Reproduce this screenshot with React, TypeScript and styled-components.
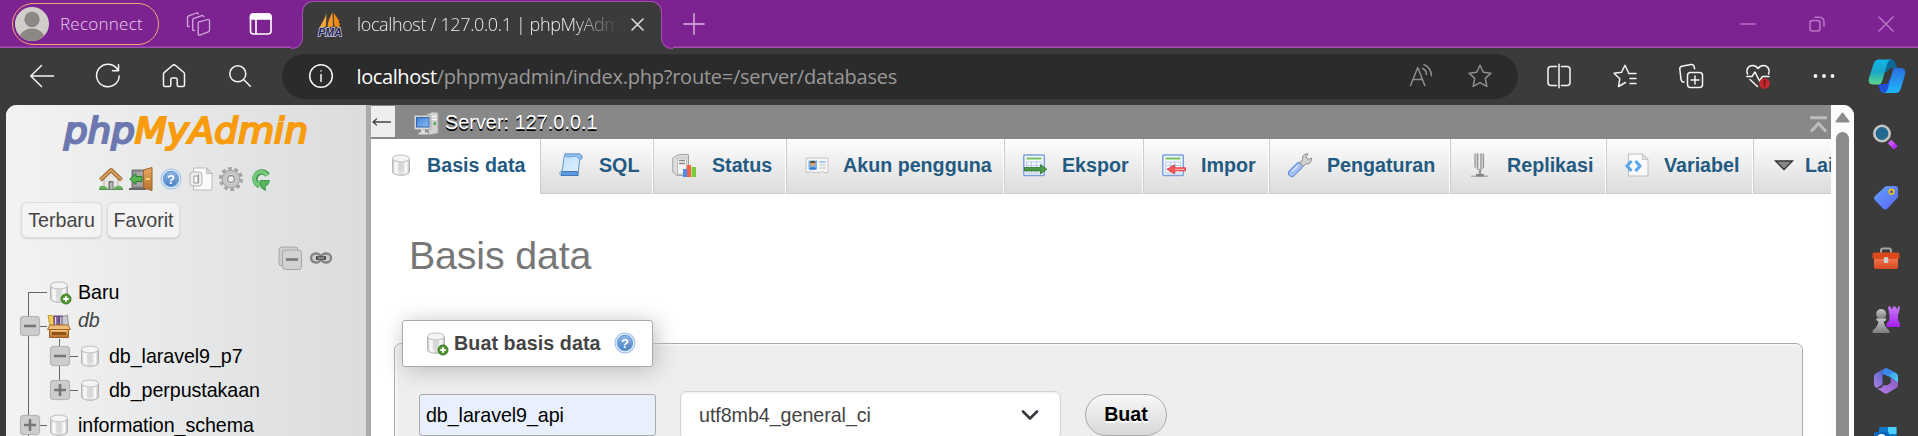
import React from "react";
import styled, { createGlobalStyle } from "styled-components";

const Global = createGlobalStyle`
  * { box-sizing: border-box; }
  html, body { margin: 0; padding: 0; background: #3b3b3b; overflow: hidden; }
  svg { display: block; flex: none; overflow: visible; }
`;

const uiFont = `"Open Sans", "Noto Sans", sans-serif`;
const pageFont = `"Liberation Sans", Arial, sans-serif`;

const Window = styled.div`
  width: 1918px;
  height: 436px;
  overflow: hidden;
  display: flex;
  flex-direction: column;
  background: #3b3b3b;
`;

/* ---------- title bar ---------- */

const TitleBar = styled.header`
  height: 48px;
  flex: none;
  display: flex;
  align-items: center;
  padding-left: 12px;
  background: #7d2291;
  box-shadow: inset 0 -1px #a14fb1, inset 0 -2px #8b3a9d;
`;

const ProfilePill = styled.div`
  width: 147px;
  height: 42px;
  margin-bottom: 1px;
  border: 1.5px solid #f3a774;
  border-radius: 21px;
  display: flex;
  align-items: center;
  padding-left: 2px;
  gap: 11px;
`;

const PillText = styled.span`
  font: 300 17px/24px ${uiFont};
  letter-spacing: 0.25px;
  color: #e6d2ea;
`;

const Slot = styled.div<{ $left?: number; $right?: number }>`
  flex: none;
  margin-left: ${(p) => p.$left ?? 0}px;
  margin-right: ${(p) => p.$right ?? 0}px;
`;

const BrowserTab = styled.div`
  position: relative;
  width: 360px;
  height: 47px;
  margin: 1px 0 0 29px;
  padding: 0 15px 2px 15px;
  display: flex;
  align-items: center;
  background: #3b3b3b;
  border: 1px solid #a14fb1;
  border-bottom: 0;
  border-radius: 11px 11px 0 0;
`;

/* Concave foot that joins the tab to the toolbar below. */
const TabFoot = styled.i<{ $side: "left" | "right" }>`
  position: absolute;
  bottom: 0;
  ${(p) => p.$side}: -12px;
  width: 12px;
  height: 12px;
  background: #3b3b3b;
  &::before {
    content: "";
    display: block;
    height: 12px;
    background: #7d2291;
    border-bottom: 1px solid #a14fb1;
    ${(p) =>
      p.$side === "left"
        ? "border-right: 1px solid #a14fb1; border-bottom-right-radius: 11px;"
        : "border-left: 1px solid #a14fb1; border-bottom-left-radius: 11px;"}
  }
`;

const TabTitle = styled.span`
  width: 262px;
  margin-left: 15px;
  margin-right: 12px;
  overflow: hidden;
  white-space: nowrap;
  font: 300 18px/26px ${uiFont};
  letter-spacing: -0.37px;
  color: #eeeeee;
  mask-image: linear-gradient(to right, #000 215px, transparent 262px);
`;

const WindowButtons = styled.div`
  margin-left: auto;
  margin-right: 24px;
  display: flex;
  gap: 53px;
`;

/* ---------- toolbar ---------- */

const Toolbar = styled.nav`
  height: 57px;
  flex: none;
  display: flex;
  align-items: center;
  padding: 0 12px 1px 30px;
`;

const NavButtons = styled.div`
  display: flex;
  gap: 42px;
`;

const AddressBar = styled.div`
  width: 1236px;
  height: 45px;
  margin-left: 30px;
  padding: 0 26px 0 27px;
  border-radius: 23px;
  background: #2b2b2b;
  display: flex;
  align-items: center;
`;

const Url = styled.span`
  flex: 1;
  margin-left: 23.500px;
  padding-top: 1px;
  font: 400 20px/28px ${uiFont};
  letter-spacing: -0.25px;
  white-space: nowrap;
  color: #989898;
  b { font-weight: 400; color: #fff; letter-spacing: -0.4px; }
`;

const ToolButtons = styled.div`
  margin-left: 29px;
  display: flex;
  align-items: center;
  gap: 42.3px;
`;

/* ---------- body ---------- */

const Body = styled.div`
  flex: 1;
  display: flex;
  padding-left: 6px;
`;

const Viewport = styled.div`
  width: 1848px;
  height: 331px;
  display: flex;
  overflow: hidden;
  border-radius: 11px 11px 0 0;
  background: #fff;
  font-family: ${pageFont};
  font-size: 19.68px;
`;

const SideNav = styled.aside`
  width: 360px;
  flex: none;
  background: linear-gradient(to right, #f3f3f3, #dadcde);
  display: flex;
  flex-direction: column;
`;

const LogoRow = styled.div`
  height: 62px;
  flex: none;
  padding: 6px 0 0 54px;
`;

const LinkIcons = styled.div`
  display: flex;
  flex: none;
  gap: 6px;
  padding-left: 93px;
`;

const Shortcuts = styled.div`
  display: flex;
  flex: none;
  gap: 5px;
  margin: 11px 0 0 15px;
`;

const ShortcutButton = styled.button<{ $w: number }>`
  width: ${(p) => p.$w}px;
  height: 36px;
  padding: 0;
  border: 1px solid #dcdcdc;
  border-radius: 6px;
  background: #f3f3f3;
  box-shadow: 0 1px 2px rgba(0, 0, 0, 0.13);
  font: 19.68px/34px ${pageFont};
  color: #444;
`;

const TreeTools = styled.div`
  height: 37px;
  flex: none;
  display: flex;
  align-items: center;
  justify-content: flex-end;
  gap: 7px;
  padding: 3px 33px 0 0;
`;

const Tree = styled.div`
  display: flex;
  flex: none;
  flex-direction: column;
`;

const TreeRow = styled.div<{ $h?: number; $pad?: number }>`
  height: ${(p) => p.$h ?? 34}px;
  padding: ${(p) => p.$pad ?? 0}px 0 0 14px;
  flex: none;
  display: flex;
  align-items: center;
`;

const Rail = styled.div<{ $from?: string; $to?: string; $line?: number; $h?: number }>`
  position: relative;
  width: 20px;
  height: ${(p) => p.$h ?? 34}px;
  flex: none;
  display: flex;
  align-items: center;
  &::before {
    content: "";
    position: absolute;
    left: ${(p) => p.$line ?? 8}px;
    top: ${(p) => p.$from ?? "0"};
    bottom: ${(p) => p.$to ?? "0"};
    width: 1px;
    background: #666;
  }
`;

const Wire = styled.i<{ $w: number; $left?: number }>`
  width: ${(p) => p.$w}px;
  margin-left: ${(p) => p.$left ?? 0}px;
  height: 1px;
  flex: none;
  background: #666;
`;

const Toggle = styled.span`
  position: relative;
  width: 20px;
  height: 20px;
  border: 1px solid #b5b5b5;
  border-radius: 4px;
  background: #cdcdcd;
  box-shadow: 0 0 1px #aaa;
  display: flex;
  align-items: center;
  justify-content: center;
`;

const NodeName = styled.span<{ $group?: boolean }>`
  margin-left: 7px;
  margin-top: ${(p) => (p.$group ? -12 : -1)}px;
  line-height: 24px;
  letter-spacing: -0.07px;
  color: ${(p) => (p.$group ? "#444" : "#000")};
  font-style: ${(p) => (p.$group ? "italic" : "normal")};
`;

const Resizer = styled.div`
  width: 5px;
  flex: none;
  background: #aaa;
`;

const Main = styled.main`
  width: 1460px;
  flex: none;
  overflow: hidden;
  background: #fff;
`;

const ServerBar = styled.div`
  height: 34px;
  display: flex;
  align-items: flex-start;
  background: #888;
`;

const Collapser = styled.div`
  width: 24px;
  height: 31px;
  margin-top: 1px;
  background: #eee;
  display: flex;
  align-items: center;
  padding-left: 1px;
`;

const ServerIcon = styled.div`
  margin: 7px 0 0 19px;
`;

const ServerText = styled.span`
  margin: 5px 0 0 7px;
  line-height: 24px;
  letter-spacing: 0.1px;
  color: #fff;
  text-shadow: 0 1.5px 0 #000;
`;

const TopLink = styled.div`
  margin: 11px 4px 0 auto;
`;

const TabStrip = styled.div`
  display: flex;
  height: 55px;
`;

const PageTab = styled.a<{ $w: number; $gap?: number; $active?: boolean }>`
  width: ${(p) => p.$w}px;
  flex: none;
  display: flex;
  align-items: center;
  gap: ${(p) => p.$gap ?? 15}px;
  padding: 0 0 ${(p) => (p.$active ? 4 : 3)}px 18px;
  font-weight: bold;
  line-height: 24px;
  white-space: nowrap;
  color: #235a81;
  background: ${(p) => (p.$active ? "#fff" : "linear-gradient(#fdfdfd, #dcdcdc)")};
  ${(p) => !p.$active && "border: 1px solid #ccc; border-top: 0; border-right-color: #fff;"}
`;

const Heading = styled.h2`
  margin: 37.500px 0 0 38px;
  font: normal 39.36px/46px ${pageFont};
  letter-spacing: -0.15px;
  color: #777;
`;

const Fieldset = styled.section`
  width: 1409px;
  height: 200px;
  margin: 65.500px 0 0 23px;
  border: 1px solid #aaa;
  border-radius: 7px 7px 0 0;
  background: #eee;
  box-shadow: inset 1px 1px 3px #fff;
`;

const Legend = styled.div`
  width: 251px;
  height: 47px;
  margin: -24px 0 0 7px;
  padding: 0 0 1px 21px;
  display: flex;
  align-items: center;
  border: 1px solid #aaa;
  border-radius: 3px;
  background: #fff;
  box-shadow: 3px 3px 22px #bbb;
  font-weight: bold;
  color: #444;
`;

const LegendText = styled.span`
  margin: 0 12px 0 6px;
  line-height: 24px;
  letter-spacing: 0.08px;
`;

const FormRow = styled.div`
  display: flex;
  align-items: center;
  margin: 24px 0 0 24px;
`;

const NameInput = styled.div`
  width: 237px;
  height: 42px;
  padding-left: 6px;
  border: 1px solid #aaa;
  border-radius: 3px;
  background: #e8f0fe;
  line-height: 41px;
  letter-spacing: -0.07px;
  color: #000;
`;

const Collation = styled.div`
  width: 381px;
  height: 48px;
  margin-left: 24px;
  padding: 0 21px 0 18px;
  display: flex;
  align-items: center;
  justify-content: space-between;
  border: 1px solid #ced4da;
  border-radius: 6px;
  background: #fff;
  box-shadow: inset 0 1px 2px rgba(0, 0, 0, 0.08);
  line-height: 46px;
  letter-spacing: -0.05px;
  color: #444;
`;

const CreateButton = styled.button`
  width: 82px;
  height: 42px;
  margin-left: 24px;
  padding: 0 0 1px;
  border: 1px solid #aaa;
  border-radius: 21px;
  background: linear-gradient(#f8f8f8, #d8d8d8);
  font: bold 19.68px/39px ${pageFont};
  color: #000;
  text-shadow: 0 1.5px 0 #fff;
`;

const ScrollTrack = styled.div`
  width: 23px;
  flex: none;
  display: flex;
  flex-direction: column;
  align-items: center;
  padding: 7px 0 0 0;
  background: #fcfcfc;
`;

const ScrollThumb = styled.div`
  flex: 1;
  width: 13px;
  margin-top: 9px;
  border-radius: 7px 7px 0 0;
  background: #8b8b8b;
`;

const EdgeSidebar = styled.aside`
  width: 64px;
  height: 331px;
  overflow: hidden;
  display: flex;
  flex-direction: column;
  align-items: center;
  gap: 33px;
  padding-top: 18px;
`;

/* ---------- line icons ---------- */

const LineSvg = styled.svg<{ $c?: string; $sw?: number }>`
  fill: none;
  stroke: ${(p) => p.$c ?? "#f5f5f5"};
  stroke-width: ${(p) => p.$sw ?? 1.5};
  stroke-linecap: round;
  stroke-linejoin: round;
`;

type LineProps = { c?: string; sw?: number; children: React.ReactNode; size?: number };
const Line = ({ c, sw, size = 24, children }: LineProps) => (
  <LineSvg $c={c} $sw={sw} width={size} height={size} viewBox={`0 0 ${size} ${size}`}>
    {children}
  </LineSvg>
);

const STAR = "M12 1.2l3.3 7 7.6 1-5.6 5.2 1.5 8L12 18.600l-6.800 3.800 1.500-8L1.100 9.200l7.600-1z";

const Avatar = () => (
  <svg width="34" height="34" viewBox="0 0 34 34">
    <defs>
      <clipPath id="face"><circle cx="17" cy="17" r="17" /></clipPath>
    </defs>
    <circle cx="17" cy="17" r="17" fill="#d0cecb" />
    <g clipPath="url(#face)" fill="#8b8886">
      <circle cx="17" cy="12.500" r="7.700" />
      <ellipse cx="17" cy="33" rx="13" ry="11.500" />
    </g>
  </svg>
);

const Favicon = () => (
  <svg width="24" height="24" viewBox="0 0 24 24">
    <path d="M8.500 1.500C7 6 4 11 1.500 15.500l6.500-1z" fill="#f5a53a" />
    <path d="M14.500 0C12 5 9.500 10 9.500 15.500l5.500-1z" fill="#f7951d" />
    <path d="M16 1c-.5 5 0 10 .500 13.500l6.500 1c-3-1.500-1-3-1-4l-2-1c2-1 1-2 .500-2.500z" fill="#f08a12" />
    <text x="0.300" y="23.600" textLength="23.500" lengthAdjust="spacingAndGlyphs" fontFamily="Liberation Sans, sans-serif" fontSize="10.500" fontWeight="bold" fontStyle="italic" fill="#23234f" stroke="#c3c3dc" strokeWidth="1.600" paintOrder="stroke">PMA</text>
  </svg>
);

const Copilot = () => (
  <svg width="38" height="34" viewBox="0 0 38 34">
    <defs>
      <linearGradient id="cpA" x1="0" y1="0" x2="0" y2="1"><stop offset="0" stopColor="#12b5e8" /><stop offset=".5" stopColor="#1aa7c8" /><stop offset="1" stopColor="#5fd98a" /></linearGradient>
      <linearGradient id="cpB" x1="0" y1="0" x2="0" y2="1"><stop offset="0" stopColor="#2a6fe0" /><stop offset="1" stopColor="#1fb6fa" /></linearGradient>
    </defs>
    <path d="M19 0.500h4c3 0 4 2 4.700 4.500l1.300 4h-5c-3 0-4 2-5 5l-5-4z" fill="#0b6a95" />
    <path d="M10 25h6c3 0 4-2 5-5l5 3-3 7c-1 3-2 4-4 4h-3c-3 0-4-2-4.500-4.500z" fill="#1d4fd8" />
    <path d="M10.500.5H24c-3 0-4 2-5 5L14.500 21c-1 3-2 4.500-4.500 4.500H5c-4 0-5-3-4-6.500L5.500 5C6.500 2 8 .5 10.500.5z" fill="url(#cpA)" />
    <path d="M27 9h5.500c4 0 5.500 3 4.500 6.500L33 29c-1 3-2.500 5-5.500 5H15c3 0 4-2 5-5l4-15c1-3 1-5 3-5z" fill="url(#cpB)" />
    <path d="M18.500 13h4.300l-3.600 12h-4.500z" fill="#3b3b3b" />
  </svg>
);

/* ---------- page icons ---------- */

const HiddenSvg = styled.svg`
  position: absolute;
`;

const Defs = () => (
  <HiddenSvg width="0" height="0">
    <defs>
      <linearGradient id="cyl" x1="0" y1="0" x2="1" y2="0"><stop offset="0" stopColor="#c9c9c9" /><stop offset=".2" stopColor="#f8f8f8" /><stop offset=".5" stopColor="#dcdcdc" /><stop offset=".8" stopColor="#f4f4f4" /><stop offset="1" stopColor="#bdbdbd" /></linearGradient>
      <linearGradient id="blu" x1="0" y1="0" x2="0" y2="1"><stop offset="0" stopColor="#8db7e8" /><stop offset="1" stopColor="#4a80c2" /></linearGradient>
      <linearGradient id="scroll" x1="0" y1="0" x2="1" y2="1"><stop offset="0" stopColor="#b5dcfa" /><stop offset="1" stopColor="#eaf5fe" /></linearGradient>
      <linearGradient id="wood" x1="0" y1="0" x2="0" y2="1"><stop offset="0" stopColor="#e8a960" /><stop offset="1" stopColor="#b87430" /></linearGradient>
      <linearGradient id="mon" x1="0" y1="0" x2="1" y2="1"><stop offset="0" stopColor="#3f7fd0" /><stop offset="1" stopColor="#8ec0f5" /></linearGradient>
      <linearGradient id="tag" x1="0" y1="0" x2="1" y2="1"><stop offset="0" stopColor="#62a4fa" /><stop offset="1" stopColor="#5a63f5" /></linearGradient>
      <linearGradient id="purple" x1="0" y1="0" x2="0" y2="1"><stop offset="0" stopColor="#c77bf5" /><stop offset="1" stopColor="#a51ef5" /></linearGradient>
      <linearGradient id="pawn" x1="0" y1="0" x2="0" y2="1"><stop offset="0" stopColor="#c6c6c6" /><stop offset="1" stopColor="#7d7d7d" /></linearGradient>
      <linearGradient id="box" x1="0" y1="0" x2="0" y2="1"><stop offset="0" stopColor="#f0764f" /><stop offset="1" stopColor="#d9481f" /></linearGradient>
      <linearGradient id="offA" x1="0" y1="1" x2="1" y2="0"><stop offset="0" stopColor="#b07fe0" /><stop offset="1" stopColor="#3a5fd0" /></linearGradient>
      <linearGradient id="offB" x1="0" y1="0" x2="1" y2="1"><stop offset="0" stopColor="#2f7be0" /><stop offset="1" stopColor="#4fd2f7" /></linearGradient>
      <linearGradient id="offC" x1="0" y1="1" x2="1" y2="0"><stop offset="0" stopColor="#b47ee8" /><stop offset="1" stopColor="#8a58c0" /></linearGradient>
    </defs>
  </HiddenSvg>
);

const Art = ({ children, w = 24, h = 24 }: { children: React.ReactNode; w?: number; h?: number }) => (
  <svg width={w} height={h} viewBox={`0 0 ${w} ${h}`}>{children}</svg>
);

const CylinderShape = () => (
  <g>
    <path d="M3.500 5.500v13c0 5 17 5 17 0v-13z" fill="url(#cyl)" stroke="#b4b4b4" />
    <path d="M6.500 8v11M17.500 8v11" stroke="#fff" strokeWidth="1.500" opacity=".8" />
    <ellipse cx="12" cy="5.500" rx="8.500" ry="3.500" fill="#f4f4f4" stroke="#bdbdbd" />
    <path d="M9 9.500v9h6v-9z" fill="#d2d2d2" opacity=".6" />
  </g>
);
const Database = () => <Art><CylinderShape /></Art>;
const DatabaseNew = () => (
  <Art>
    <CylinderShape />
    <circle cx="19" cy="19" r="5" fill="#4f9430" stroke="#3b7a20" />
    <path d="M19 16.200v5.600M16.200 19h5.600" stroke="#fff" strokeWidth="2" />
  </Art>
);
const Help = () => (
  <Art>
    <circle cx="12" cy="12" r="10.500" fill="#a3c1e6" />
    <circle cx="12" cy="12" r="8.800" fill="#6b9bd4" stroke="#dfeafa" strokeWidth="1.300" />
    <circle cx="12" cy="12" r="7" fill="url(#blu)" />
    <text x="12" y="16.600" textAnchor="middle" fontFamily="Liberation Sans, sans-serif" fontSize="13" fontWeight="bold" fill="#fff">?</text>
  </Art>
);
const House = () => (
  <Art>
    <path d="M5 12l7-7 7 7v9H5z" fill="#e9e6e2" stroke="#b9b3aa" />
    <path d="M9.500 14h5v8h-5z" fill="#777" />
    <path d="M11 15.500h2.500V22H11z" fill="#b5b5b5" />
    <path d="M1.500 13L12 3l10.500 10" fill="none" stroke="#99612a" strokeWidth="4" strokeLinejoin="round" />
    <path d="M1.800 12.600L12 3l10.200 9.600" fill="none" stroke="#dba263" strokeWidth="2" />
    <path d="M0 22c0-3 3-4 4.500-3 2 0 3 1 4 3zM15 22c0-2 2-3 3.500-3 2-1 5 0 5.500 3z" fill="#64b35a" />
    <path d="M0 22.500h24" stroke="#5b8a55" />
  </Art>
);
const Exit = () => (
  <Art>
    <path d="M3 3h15v18H3z" fill="#8c8c8c" stroke="#6f6f6f" />
    <path d="M5 5h10v14H5z" fill="#a6a6a6" />
    <path d="M0 22h17" stroke="#666" strokeWidth="2" />
    <path d="M14.500 3L23 .500v23L14.500 21z" fill="url(#wood)" stroke="#a0642a" />
    <path d="M17 12h3.500" stroke="#ffe07a" strokeWidth="2" />
    <path d="M.8 12L7 6.500v3h6v5H7v3z" fill="#58b453" stroke="#2f7d35" />
  </Art>
);
const Doc = () => (
  <Art>
    <path d="M4.500 1h13l5.500 5.500v16.500h-18.500z" fill="#fafafa" stroke="#bcbcbc" />
    <path d="M17.500 1v5.500H23z" fill="#d8d8d8" stroke="#bcbcbc" />
    <rect x="1" y="5" width="12" height="14" rx="3" fill="#eee" stroke="#b5b5b5" />
    <path d="M5 9h4v7H5z" fill="#fff" stroke="#999" />
    <path d="M9.500 7v9" stroke="#999" />
  </Art>
);
const Gear = () => (
  <Art>
    <g fill="none" stroke="#a3a3a3">
      <circle cx="12" cy="12" r="10" strokeWidth="4" strokeDasharray="3.600 2.683" />
      <circle cx="12" cy="12" r="7" strokeWidth="4" stroke="#c4c4c4" />
      <circle cx="12" cy="12" r="8.800" strokeWidth="1" />
      <circle cx="12" cy="12" r="3.600" stroke="#8f8f8f" strokeWidth="1.500" fill="#ededed" />
    </g>
  </Art>
);
const Reload = () => (
  <Art>
    <path d="M18.500 8.200A6.800 6.800 0 1 0 10.500 18.300" fill="none" stroke="#439a4d" strokeWidth="5.500" />
    <path d="M18.200 8.700A6.800 6.800 0 1 0 10.700 18.200" fill="none" stroke="#74ca78" strokeWidth="3.500" />
    <path d="M11 13.500h9.500l-1.500 4-3 1.500.5 4.500-4.500-3z" fill="#58b35d" stroke="#439a4d" />
  </Art>
);
const CollapseAll = () => (
  <Art>
    <rect x="1" y="1" width="19" height="19" rx="3" fill="#cfcfcf" stroke="#a5a5a5" />
    <rect x="4.500" y="4" width="19" height="19.500" rx="3" fill="#d2d2d2" stroke="#a5a5a5" />
    <path d="M8 13.500h12" stroke="#777" strokeWidth="2.600" />
  </Art>
);
const Chain = () => (
  <Art>
    <rect x="2" y="7.500" width="10" height="9" rx="4.500" fill="#ccc" stroke="#858585" strokeWidth="2.400" />
    <rect x="12" y="7.500" width="10" height="9" rx="4.500" fill="#ccc" stroke="#858585" strokeWidth="2.400" />
    <path d="M7 12h10" stroke="#444" strokeWidth="3.600" />
    <path d="M9 12h6" stroke="#aaa" strokeWidth="1.400" />
  </Art>
);
const Group = () => (
  <Art>
    <path d="M1 1.500h5l2 11H3z" fill="#ecd05a" stroke="#c39f2b" />
    <path d="M7 2h5v10H7zM12 2h4v10h-4z" fill="#8a6a9e" stroke="#5d4572" />
    <path d="M8.500 3v8M13.800 3v8" stroke="#e5dcec" />
    <path d="M15.500 3l5-2 1 11h-6z" fill="#c9cbcf" stroke="#8f9398" />
    <path d="M3 11h18l2.500 4.500H.5z" fill="#f0be7c" stroke="#a96a25" />
    <path d="M2.500 15.500h19v8h-19z" fill="url(#wood)" stroke="#9c5c1c" />
    <path d="M5 18h14v3H5z" fill="#8f5518" />
    <path d="M4 16.800h16" stroke="#ffd79a" />
  </Art>
);
const Server = () => (
  <Art>
    <path d="M12 3l7-3 5 1v20l-9 2z" fill="#d2d2d2" stroke="#a7a7a7" />
    <path d="M17 5l6-1M17 8l6-1" stroke="#fff" />
    <path d="M19.500 11.500h2.500" stroke="#3fae3f" strokeWidth="2.500" />
    <rect x=".5" y="3.500" width="16.500" height="14" rx="1" fill="#d8d8d8" stroke="#aaa" />
    <rect x="2.500" y="5.500" width="12.500" height="9.500" fill="url(#mon)" stroke="#2e66b0" />
    <path d="M7 17.500h4v3h3v2H4.500v-2H7z" fill="#ddd" />
  </Art>
);
const Sql = () => (
  <Art>
    <path d="M6 1h14c4 0 4 6 .500 6l-1.500 15.500H2.500C0 22.500.5 18 3 18c1.500-5 1-12 3-17z" fill="url(#scroll)" stroke="#6495cd" />
    <path d="M3 18.500h15.500l.5 4H2.500z" fill="#5b9be0" stroke="#4478b8" />
    <path d="M6 1h14c3 0 3.500 4 1 5.500C19 7 19 2.500 16 3.500L7.500 4z" fill="#92c0f0" stroke="#6495cd" strokeWidth=".8" />
  </Art>
);
const Status = () => (
  <Art>
    <path d="M.8 5L7 1.500h9.500v21H5L.8 19z" fill="#dedede" stroke="#a2a2a2" />
    <path d="M5.500 5h9v16h-9z" fill="#f5f5f5" stroke="#bbb" />
    <path d="M7 7.500h6M7 10.500h6" stroke="#888" strokeWidth="1.500" />
    <path d="M11 16h4v8h-4z" fill="#4d8cf0" /><path d="M15 12h4v12h-4z" fill="#f0653f" /><path d="M19.500 14h4.500v10h-4.500z" fill="#7cc93a" />
  </Art>
);
const Users = () => (
  <Art>
    <path d="M1 5h22v14.500h-4l-1.500-1.500-2 1.500H8l-2-1.500-1.500 1.500H1z" fill="#f6f6f6" stroke="#c4c4c4" />
    <rect x="3.500" y="7.500" width="8.500" height="9" fill="#6db3f2" />
    <circle cx="7.700" cy="11" r="2.500" fill="#dba271" /><path d="M5 10c0-3 5.500-3 5.500 0z" fill="#6d4526" /><path d="M4.500 16.500c0-3 6.500-3 6.500 0z" fill="#2a70c8" />
    <path d="M14.500 9h6" stroke="#8bbcf0" strokeWidth="1.500" /><path d="M14.500 12h6M14.500 15h6" stroke="#bbb" strokeWidth="1.200" />
  </Art>
);
const Sheet = ({ children }: { children: React.ReactNode }) => (
  <Art>
    <rect x=".8" y="2" width="20.500" height="20.500" rx="1" fill="#f4f8fd" stroke="#7b9fdb" strokeWidth="1.500" />
    <path d="M3.500 5.500h15" stroke="#79c15f" strokeWidth="2" />
    <path d="M3.500 9h15v11h-15zM3.500 12.500h15M3.500 16h15M8.500 9v11M13.500 9v11" fill="none" stroke="#b9cdea" />
    {children}
  </Art>
);
const Export = () => (
  <Sheet><path d="M1.500 14.500h16v-3l6.300 4.700-6.300 4.700v-3h-16z" fill="#4b9a48" stroke="#2d7230" strokeWidth=".8" /></Sheet>
);
const Import = () => (
  <Sheet><path d="M23.500 14.800h-11v-3L5 16.300l7.500 4.500v-3h11z" fill="#f45a5a" stroke="#e02c2c" strokeWidth=".8" /><path d="M13 16.300h9.500" stroke="#fbb" /></Sheet>
);
const Wrench = () => (
  <Art>
    <path d="M3.800 20.200L11 13" stroke="#5b85d6" strokeWidth="7.500" strokeLinecap="round" />
    <path d="M3.800 20.200L11 13" stroke="#a4c2f5" strokeWidth="5.500" strokeLinecap="round" />
    <path d="M4 18.500l6-6" stroke="#d5e3fc" strokeWidth="1.500" />
    <path d="M12 10l2.500-3.500C14 3 16 .5 20 .8L18 4l2 2.500 3.500-1.500c.5 4-2.500 6.500-5.500 6L15 13.500z" fill="#cfcfcf" stroke="#8d8d8d" />
  </Art>
);
const Replica = () => (
  <Art>
    <path d="M6 .500v14l4 3 4-1.500V.500z" fill="#d4d4d4" />
    <path d="M6 .500v14M8.500.5v16M12 .500v16M14.500.5v15" stroke="#979797" strokeWidth="1.200" />
    <path d="M10.500.500v15" stroke="#eee" /><path d="M11 16v6" stroke="#999" strokeWidth="2.500" />
    <path d="M2 23.200h17" stroke="#b0b0b0" strokeWidth="1.600" /><path d="M7 22.200h8" stroke="#858585" strokeWidth="2.500" />
  </Art>
);
const Variables = () => (
  <Art>
    <path d="M3.500 1h14l5.500 5.500v16.500h-19.500z" fill="#fafafa" stroke="#bdbdbd" />
    <path d="M17.500 1v5.500H23z" fill="#e3e3e3" stroke="#c4c4c4" />
    <path d="M6.500 8L2 13l4.500 5M10.500 8l4.500 5-4.500 5" fill="none" stroke="#5aa5ee" strokeWidth="3" />
  </Art>
);
const More = () => (
  <Art><path d="M3.500 8h17L12 16.500z" fill="#888" stroke="#333" strokeWidth="1.300" /></Art>
);

/* ---------- browser sidebar icons ---------- */

const SideSearch = () => (
  <Art w={28} h={28}>
    <path d="M17.500 18.500l6 6" stroke="#c657f5" strokeWidth="5" /><path d="M21 22l2.800 2.800" stroke="#b22cf5" strokeWidth="5" />
    <circle cx="10" cy="10.500" r="7.700" fill="#23698f" stroke="#c4c4c4" strokeWidth="2.600" />
  </Art>
);
const SideTag = () => (
  <Art w={28} h={28}>
    <path d="M15 2h8.500c1.500 0 2.500 1 2.500 2.500V12c0 1-.3 1.500-1 2.200L15.500 24.500c-1.500 1.500-3 1.500-4.500 0l-8-8.200c-1.300-1.500-1.300-3 0-4.300L13 2.800c.7-.6 1-.8 2-.8z" fill="url(#tag)" />
    <circle cx="19.500" cy="7.700" r="2.300" fill="#3c59b5" stroke="#f5c60e" strokeWidth="1.600" />
  </Art>
);
const SideBox = () => (
  <Art w={28} h={28}>
    <path d="M9 8V5.500C9 4 10 3.500 11 3.500h6c1 0 2 .5 2 2V8" fill="none" stroke="#a5a5a5" strokeWidth="2" />
    <path d="M2 13h24v9c0 1.500-1 2-2 2H4c-1 0-2-.5-2-2z" fill="url(#box)" />
    <rect x=".5" y="7.500" width="27" height="6.500" rx="1.500" fill="#d9491c" />
    <rect x="11.800" y="12" width="4.500" height="6" rx="1.500" fill="#d0d0d0" />
  </Art>
);
const SideChess = () => (
  <Art w={28} h={28}>
    <path d="M16 .500h2.800v2h2v-2h3v2h2v-2H28l-1.200 7L26 8v6l2 4v3H14.500v-3l3-4V8L17 7.500z" fill="url(#purple)" />
    <circle cx="9.200" cy="8" r="5" fill="url(#pawn)" />
    <path d="M4 12.500h10.500l-1 2.500h-1.700c0 4 2 6 4.200 8.500.8.500 1.500 1 1.500 2 0 1-.5 1.500-1.500 1.500H2c-1 0-1.500-.5-1.500-1.500 0-1 .5-1.500 1.500-2 2.500-2.500 4.300-4.500 4.300-8.500H5z" fill="url(#pawn)" />
  </Art>
);
const SideOffice = () => (
  <Art w={28} h={28}>
    <path d="M14 1l10 5c1.500.8 2 2 2 3.500V16l-7-5.500L10 6z" fill="url(#offB)" />
    <path d="M14 1c-3 1.500-3.500 3-3.500 6v10.500L5 21c-2-1-3-2-3-4v-7c0-2 .7-3 2.500-4L12 1.700z" fill="url(#offA)" />
    <path d="M10.500 7c0-3 .5-4.500 3.500-6l9 4.500c-3-.5-5 1-6.500 3.500z" fill="#3e86ea" />
    <path d="M26 16v1.500c0 2-1 3-2.500 4L16 26c-1.500.8-2.500.8-4 0l-7-4.500c3 .5 5-1 6-3l6.500-1.500c1.500-1 1-3 1-6.500z" fill="url(#offC)" />
    <path d="M11 10.500l3.500-1 4 3v3l-4 3-3.500-1.500z" fill="#3b3b3b" />
  </Art>
);
const SideMail = () => (
  <Art w={28} h={28}>
    <rect x="7" y="-1" width="17.500" height="22" rx="1" fill="#1277c8" /><path d="M16 -1h8.500v7H16z" fill="#4bd0fa" />
    <rect x="2" y="4" width="15" height="15" rx="1.500" fill="#0b66bd" /><circle cx="9.500" cy="11" r="4" fill="none" stroke="#fff" strokeWidth="2" />
  </Art>
);

const PAGE_TABS: { label: string; w: number; gap?: number; icon: React.ReactNode }[] = [
  { label: "Basis data", w: 169, gap: 14, icon: <Database /> },
  { label: "SQL", w: 113, gap: 16, icon: <Sql /> },
  { label: "Status", w: 133, gap: 16, icon: <Status /> },
  { label: "Akun pengguna", w: 218, gap: 14, icon: <Users /> },
  { label: "Ekspor", w: 139, icon: <Export /> },
  { label: "Impor", w: 126, icon: <Import /> },
  { label: "Pengaturan", w: 181, icon: <Wrench /> },
  { label: "Replikasi", w: 156, gap: 14, icon: <Replica /> },
  { label: "Variabel", w: 147, icon: <Variables /> },
  { label: "Lainnya", w: 140, gap: 9, icon: <More /> },
];

const ToggleBox = ({ open }: { open?: boolean }) => (
  <Toggle>
    <Art w={14} h={14}>
      <path d={open ? "M1 7h12" : "M1 7h12M7 1v12"} stroke="#777" strokeWidth="2.600" />
    </Art>
  </Toggle>
);

export default function App() {
  return (
    <Window>
      <Global />
      <Defs />
      <TitleBar>
        <ProfilePill>
          <Avatar />
          <PillText>Reconnect</PillText>
        </ProfilePill>
        <Slot $left={27}>
          <Line c="#d3a9dc" sw={1.3}>
            <path d="M12.500 10.200l9.300-2.700c.9-.2 1.700.3 1.700 1.200v9.300c0 .9-.4 1.500-1.200 1.800l-8.500 3.300c-1 .3-1.600-.2-1.600-1.100v-10.500c0-.7.300-1.100.300-1.300z" />
            <path d="M8.500 18.500c-1 .3-1.800-.2-1.800-1.100V8c0-.8.400-1.400 1.200-1.700l8-2.700c.9-.3 1.800.2 1.800 1.100" />
            <path d="M3.200 14.500c-1 .3-1.700-.2-1.700-1.100V5.500c0-.8.400-1.400 1.200-1.700L10.500 1c.9-.3 1.800.2 1.800 1.100" />
          </Line>
        </Slot>
        <Slot $left={39}>
          <Line c="#fff" sw={1.6}>
            <rect x="1.500" y="2" width="20.500" height="20" rx="3" />
            <path d="M1.500 7V5c0-2 1-3 3-3H19c2 0 3 1 3 3v2z" fill="#fff" />
            <path d="M7 7v15" />
          </Line>
        </Slot>
        <BrowserTab>
          <TabFoot $side="left" />
          <TabFoot $side="right" />
          <Favicon />
          <TabTitle>localhost / 127.0.0.1 | phpMyAdmin</TabTitle>
          <Line size={13} c="#dcdcdc" sw={1.6}><path d="M1 1l11 11M12 1L1 12" /></Line>
        </BrowserTab>
        <Slot $left={21}>
          <Line size={22} c="#d9b3e1" sw={1.4}><path d="M11 .800v20.400M.8 11h20.400" /></Line>
        </Slot>
        <WindowButtons>
          <Line size={16} c="#b673c4" sw={1.6}><path d="M1 8h14" /></Line>
          <Line size={16} c="#b673c4" sw={1.6}><rect x="1" y="4.500" width="10" height="10.500" rx="2.500" /><path d="M6 1.200h4c3 0 5 2 5 5v4" /></Line>
          <Line size={16} c="#b673c4" sw={1.6}><path d="M1 1l14 14M15 1L1 15" /></Line>
        </WindowButtons>
      </TitleBar>

      <Toolbar>
        <NavButtons>
          <Line><path d="M23.500 12H1M11.500 1.500L.8 12l10.700 10.500" /></Line>
          <Line><path d="M21.500 5.500A11.300 11.300 0 1 0 23.200 12M22.500 .800v6h-6" /></Line>
          <Line><path d="M1.500 10.200c0-.8.300-1.400.9-1.900l8-6.800c1-.8 2.200-.8 3.200 0l8 6.800c.6.500.9 1.100.9 1.900V21c0 1-.6 1.500-1.500 1.500h-4.300c-.9 0-1.500-.6-1.500-1.500v-5.500c0-1-.5-1.500-1.500-1.500h-3.400c-1 0-1.500.5-1.500 1.500V21c0 .9-.6 1.500-1.500 1.500H3c-.9 0-1.500-.5-1.500-1.500z" /></Line>
          <Line><circle cx="9.800" cy="9.800" r="8" /><path d="M15.800 15.800l6.500 6.500" /></Line>
        </NavButtons>
        <AddressBar>
          <Line><circle cx="12" cy="12" r="11.300" /><path d="M12 10.500v7M12 6.800v.3" /></Line>
          <Url><b>localhost</b>/phpmyadmin/index.php?route=/server/databases</Url>
          <Slot $right={35}>
            <Line c="#8f8f8f"><path d="M1.500 21.500L8.800 3.500l7 18M4 15.500h9.500M13.500 4.500c2.500 1 4 3.500 4 6M15 .800c4 1.200 7.500 5.500 7.500 11" /></Line>
          </Slot>
          <Line c="#8f8f8f"><path d={STAR} /></Line>
        </AddressBar>
        <ToolButtons>
          <Line><path d="M9.500 2.500H4c-2 0-3 1-3 3v13c0 2 1 3 3 3h5.500M14.500 2.500H20c2 0 3 1 3 3v13c0 2-1 3-3 3h-5.500M12 .300v23.500" /></Line>
          <Line><path d="M12.500 18.500L5.500 22.500l1.300-7.700L1 9.300l7.600-1L12 1.200l3.300 7M15.500 9.500H23M17 14.500h6M17 19.500h6" /></Line>
          <Line><rect x="8.500" y="8.500" width="15" height="15" rx="3" /><path d="M16 12v8M12 16h8M5 18c-2 .3-2.500-.7-3-2.500L.800 5c-.2-1.500.5-2.300 2-2.800L12 .500c1.500-.2 2.500.3 3 1.800l.6 2.500" /></Line>
          <Line>
            <path d="M1.500 10C-.5 4 3.500 1.500 6.500 1.500c2.500 0 4 1 5.500 3 1.500-2 3-3 5.500-3 3 0 7 2.500 5 8.500M.8 12.500H6l3-4.500 4.500 9 3-4.500h6.500M4 15.500l7.500 7" />
            <circle cx="18.500" cy="19.500" r="5.300" fill="#c4282d" stroke="none" /><path d="M18.500 16.500v3.500M18.500 22v.3" stroke="#5a1515" />
          </Line>
          <Line><g fill="#f5f5f5" stroke="none"><circle cx="3.500" cy="12" r="1.900" /><circle cx="12" cy="12" r="1.900" /><circle cx="20.500" cy="12" r="1.900" /></g></Line>
        </ToolButtons>
        <Slot $left={32}><Copilot /></Slot>
      </Toolbar>

      <Body>
        <Viewport>
          <SideNav>
            <LogoRow>
              <svg width="250" height="44" viewBox="0 0 250 44">
                <text x="4" y="31.500" textLength="244" lengthAdjust="spacingAndGlyphs" fontFamily="DejaVu Sans, sans-serif" fontSize="35" fontStyle="italic" strokeWidth="2.200" strokeLinejoin="miter" fill="#6c78af" stroke="#6c78af">
                  php<tspan fill="#f89c0e" stroke="#f89c0e">MyAdmin</tspan>
                </text>
              </svg>
            </LogoRow>
            <LinkIcons>
              <House /><Exit /><Help /><Doc /><Gear /><Reload />
            </LinkIcons>
            <Shortcuts>
              <ShortcutButton $w={81}>Terbaru</ShortcutButton>
              <ShortcutButton $w={73}>Favorit</ShortcutButton>
            </Shortcuts>
            <TreeTools><CollapseAll /><Chain /></TreeTools>
            <Tree>
              <TreeRow>
                <Rail $from="17px" />
                <Wire $w={18} $left={-11} />
                <DatabaseNew />
                <NodeName>Baru</NodeName>
              </TreeRow>
              <TreeRow $h={30} $pad={4}>
                <Rail $h={34}><ToggleBox open /></Rail>
                <Wire $w={7} />
                <Group />
                <NodeName $group>db</NodeName>
              </TreeRow>
              <TreeRow>
                <Rail />
                <Wire $w={0} $left={10} />
                <Rail $line={9}><ToggleBox open /></Rail>
                <Wire $w={8} />
                <Database />
                <NodeName>db_laravel9_p7</NodeName>
              </TreeRow>
              <TreeRow>
                <Rail />
                <Wire $w={0} $left={10} />
                <Rail $line={9} $to="17px"><ToggleBox /></Rail>
                <Wire $w={8} />
                <Database />
                <NodeName>db_perpustakaan</NodeName>
              </TreeRow>
              <TreeRow $h={36}>
                <Rail $h={36}><ToggleBox /></Rail>
                <Wire $w={7} />
                <Database />
                <NodeName>information_schema</NodeName>
              </TreeRow>
            </Tree>
          </SideNav>
          <Resizer />
          <Main>
            <ServerBar>
              <Collapser>
                <Line size={20} c="#444" sw={1.3}><path d="M1 10h17.500M4.500 7L1 10l3.500 3" /></Line>
              </Collapser>
              <ServerIcon><Server /></ServerIcon>
              <ServerText>Server: 127.0.0.1</ServerText>
              <TopLink>
                <Art w={17} h={17}><path d="M0 1.800h17M1 15.500l7.500-8 7.500 8" fill="none" stroke="#bdbdbd" strokeWidth="3" /></Art>
              </TopLink>
            </ServerBar>
            <TabStrip>
              {PAGE_TABS.map((t, i) => (
                <PageTab key={t.label} $w={t.w} $gap={t.gap} $active={i === 0}>
                  {t.icon}
                  {t.label}
                </PageTab>
              ))}
            </TabStrip>
            <Heading>Basis data</Heading>
            <Fieldset>
              <Legend>
                <DatabaseNew />
                <LegendText>Buat basis data</LegendText>
                <Help />
              </Legend>
              <FormRow>
                <NameInput>db_laravel9_api</NameInput>
                <Collation>
                  utf8mb4_general_ci
                  <Line size={18} c="#343a40" sw={2.6}><path d="M2 5.500l7 7 7-7" /></Line>
                </Collation>
                <CreateButton>Buat</CreateButton>
              </FormRow>
            </Fieldset>
          </Main>
          <ScrollTrack>
            <Art w={15} h={11}><path d="M7.500 1.500L13.500 9.500h-12z" fill="#8b8b8b" stroke="#8b8b8b" strokeWidth="2" strokeLinejoin="round" /></Art>
            <ScrollThumb />
          </ScrollTrack>
        </Viewport>
        <EdgeSidebar>
          <SideSearch /><SideTag /><SideBox /><SideChess /><SideOffice /><SideMail />
        </EdgeSidebar>
      </Body>
    </Window>
  );
}
